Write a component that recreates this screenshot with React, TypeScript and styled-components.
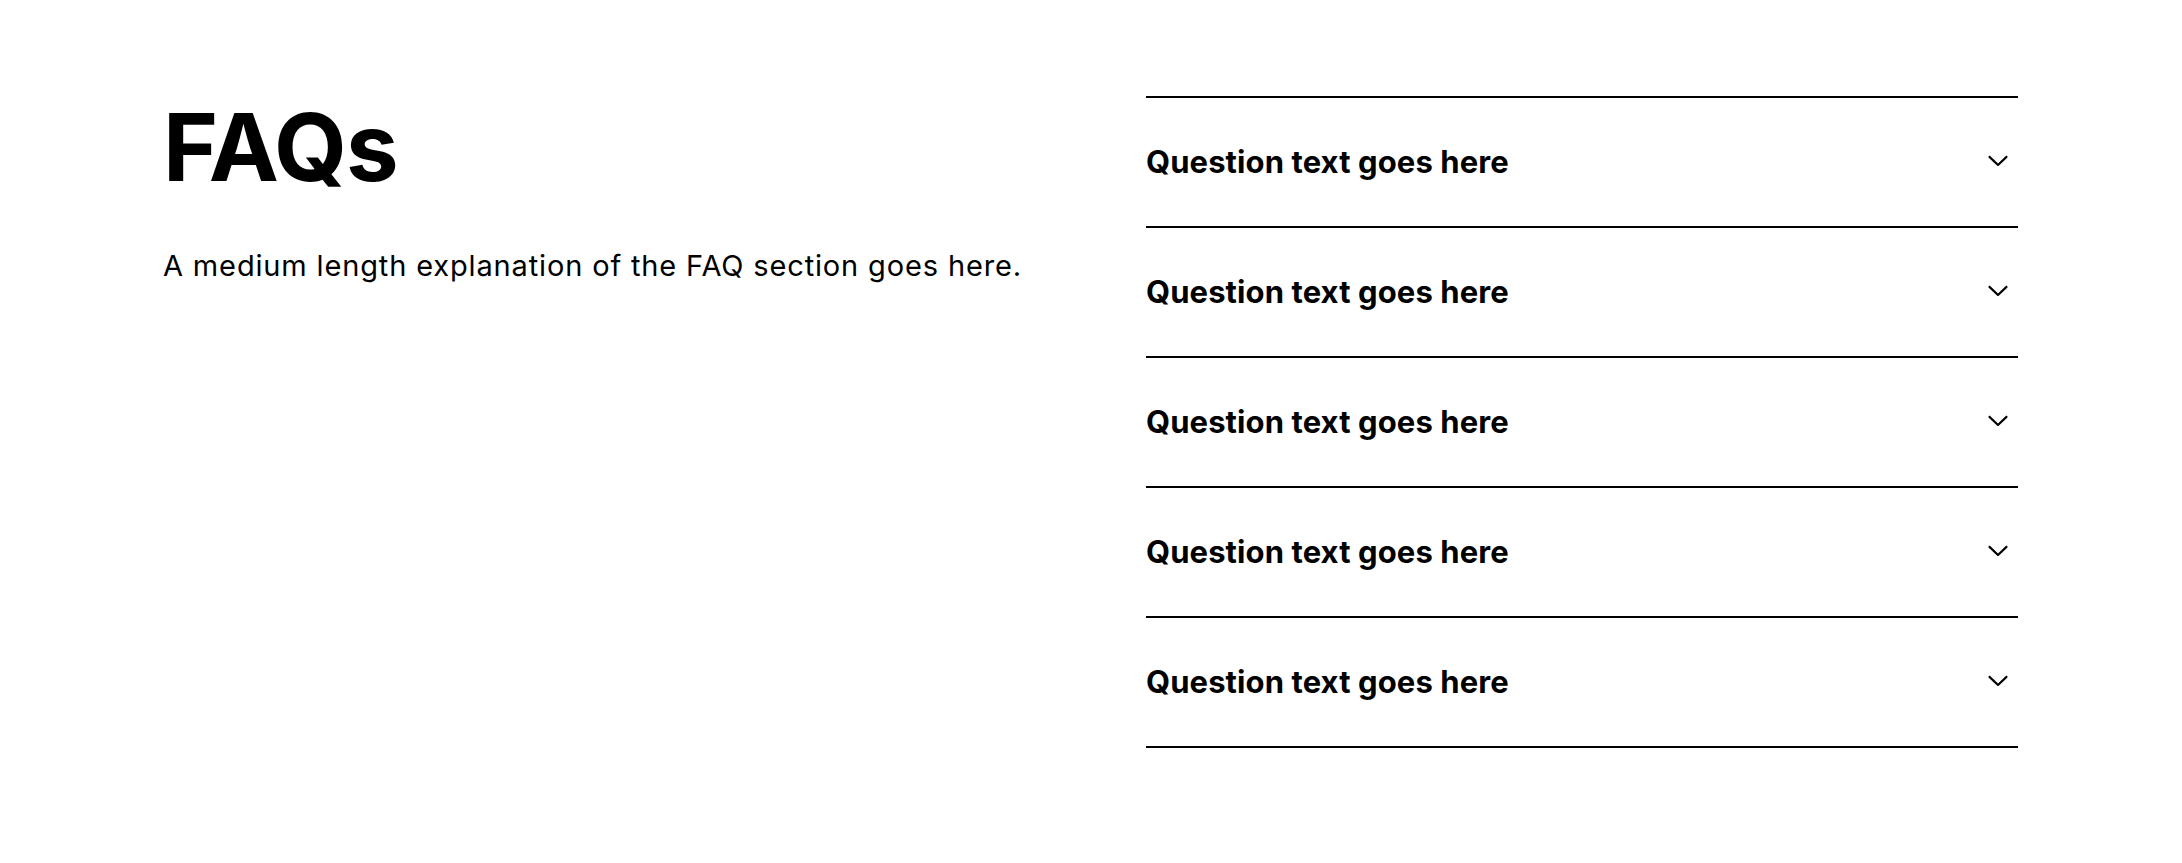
import styled, { createGlobalStyle } from 'styled-components';
import { RxChevronDown } from 'react-icons/rx';

const questions = [
  'Question text goes here',
  'Question text goes here',
  'Question text goes here',
  'Question text goes here',
  'Question text goes here',
];

function App() {
  return (
    <>
      <GlobalStyle />
      <Section>
        <Intro>
          <Heading>FAQs</Heading>
          <Lead>A medium length explanation of the FAQ section goes here.</Lead>
        </Intro>
        <List>
          {questions.map((q, i) => (
            <Item key={i}>
              <Trigger type='button'>
                <Question>{q}</Question>
                <Chevron size={32} />
              </Trigger>
            </Item>
          ))}
        </List>
      </Section>
    </>
  );
}

const GlobalStyle = createGlobalStyle`
  body {
    margin: 0;
    background: #fff;
    color: #000;
    font-family: Inter, 'Noto Sans', sans-serif;
  }
`;

const Section = styled.section`
  display: grid;
  grid-template-columns: 1fr 872px;
  column-gap: 120px;
  align-items: start;
  padding: 96px 164px 0 163px;
`;

const Intro = styled.div`
  display: flex;
  flex-direction: column;
`;

const Heading = styled.h2`
  margin: 0 0 45px;
  font-size: 94px;
  font-weight: 700;
  line-height: 1.1;
  letter-spacing: -0.01em;
`;

const Lead = styled.p`
  margin: 0;
  font-size: 29px;
  line-height: 1.5;
  letter-spacing: 0.85px;
`;

const List = styled.div`
  display: flex;
  flex-direction: column;
  border-bottom: 2px solid #000;
`;

const Item = styled.div`
  border-top: 2px solid #000;
`;

const Trigger = styled.button`
  display: flex;
  width: 100%;
  align-items: center;
  justify-content: space-between;
  gap: 24px;
  padding: 41px 0 41px;
  border: 0;
  background: none;
  color: inherit;
  font: inherit;
  text-align: left;
  cursor: pointer;
`;

const Question = styled.span`
  font-size: 31px;
  font-weight: 700;
  line-height: 46px;
  letter-spacing: 0.1px;
`;

const Chevron = styled(RxChevronDown)`
  flex-shrink: 0;
  margin: 0 4px 7px 0;
`;

export default App;
